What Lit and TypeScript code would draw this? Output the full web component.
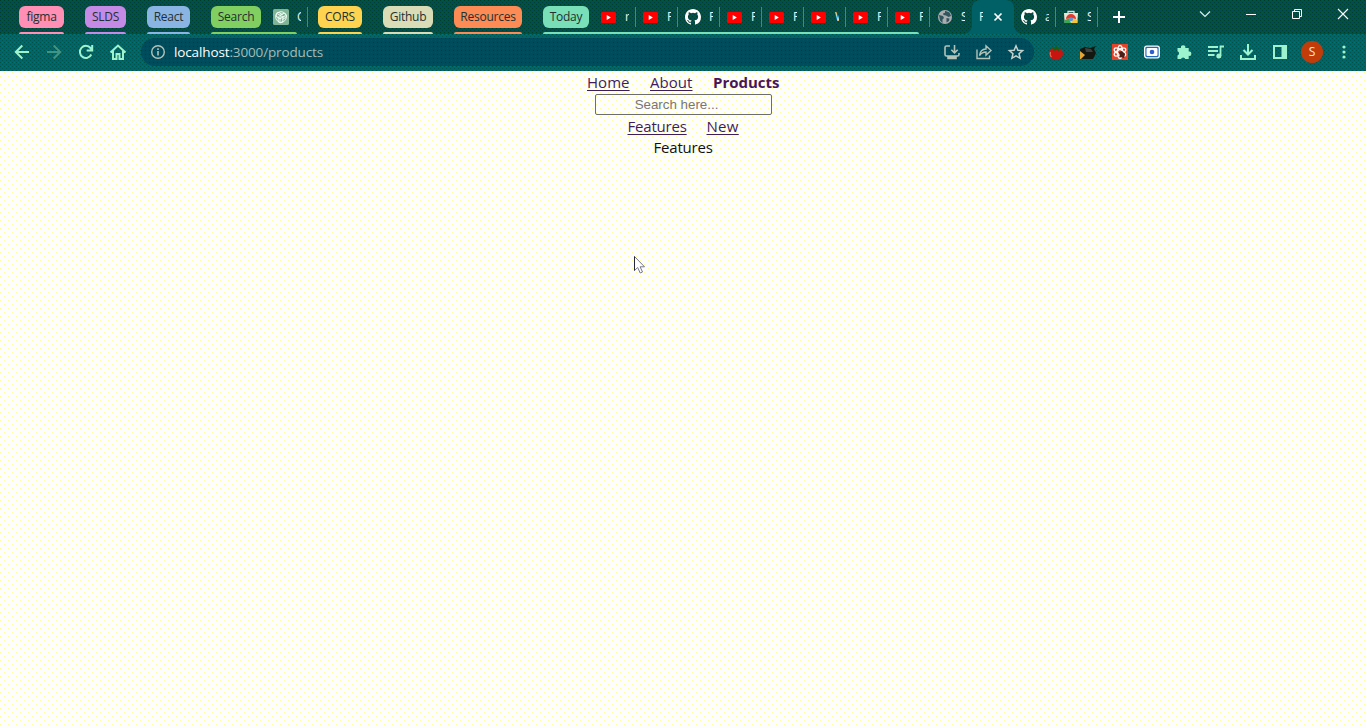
import { LitElement, html, css, svg, nothing } from "lit";
import { customElement, property } from "lit/decorators.js";

const youtube = svg`<rect x="0" y="3" width="15" height="11" rx="1.5" fill="#f00"/><path d="M5.700 6v5L9.900 8.500z" fill="#fff"/>`;
const github = svg`<path fill="#fff" d="M8 0C3.580 0 0 3.580 0 8c0 3.540 2.290 6.530 5.470 7.590.4.070.55-.170.55-.380 0-.190-.010-.820-.010-1.490-2.010.370-2.530-.490-2.690-.940-.090-.230-.480-.940-.820-1.130-.280-.150-.680-.520-.010-.530.630-.010 1.080.580 1.230.820.720 1.210 1.870.870 2.330.660.070-.520.280-.870.510-1.070-1.780-.2-3.640-.890-3.640-3.950 0-.870.310-1.590.820-2.150-.080-.2-.360-1.020.080-2.120 0 0 .670-.210 2.200.820a7.600 7.600 0 0 1 4 0c1.530-1.040 2.200-.820 2.200-.820.440 1.100.160 1.920.080 2.120.510.560.820 1.270.820 2.150 0 3.070-1.870 3.750-3.650 3.950.290.250.540.730.540 1.480 0 1.070-.010 1.930-.010 2.200 0 .210.150.460.550.380A8.010 8.010 0 0 0 16 8c0-4.420-3.580-8-8-8z"/>`;
const gpt = svg`<rect width="16" height="16" rx="1.500" fill="#7fb496"/><g fill="none" stroke="#f4fff8" stroke-width="0.900"><path id="petal" d="M7 12.500V6.300l3-1.700a2.400 2.400 0 0 1 2.600 4L9 10.600"/><path d="M7 12.500V6.300l3-1.700a2.400 2.400 0 0 1 2.600 4L9 10.600" transform="rotate(120 8 8)"/><path d="M7 12.500V6.300l3-1.700a2.400 2.400 0 0 1 2.600 4L9 10.600" transform="rotate(240 8 8)"/><circle cx="8" cy="8" r="5.300"/></g>`;
const globe = svg`<circle cx="8" cy="8" r="7" fill="#a9adb0"/><path fill="#32545c" d="M2 6l4 1 1 2-1.500 1.500V14L3 11.500zM8 1.800l4.500 1.700L14 7l-2.500 1L9 6.500 6.500 6 6 4.500l2-.7zM9.500 9l3 .5-.5 2.500-2.500 1.500z"/>`;
const store = svg`<path d="M5 4V2.500h6V4" fill="none" stroke="#ddd" stroke-width="1.300"/><path d="M1 4h14l-.7 10H1.700z" fill="#e9e6d8"/><path d="M3 10a5 5 0 0 1 10 0l-5-.8z" fill="#e23b2e"/><path d="M1.500 11 6 9.500 8 14H1.700z" fill="#38a852"/><path d="M14.500 11 10 9.500 8 14h6.300z" fill="#f4c63a"/><circle cx="8" cy="10.300" r="2" fill="#5a93e8"/>`;

interface Tab { icon: unknown; text: string }
interface Group { name: string; color: string; width: number; line: number; tabs?: Tab[] }

const yt = (text: string): Tab => ({ icon: youtube, text });
const groups: Group[] = [
  { name: "figma", color: "#ff8fb5", width: 45, line: 45 },
  { name: "SLDS", color: "#c58ae6", width: 41, line: 41 },
  { name: "React", color: "#8ab4e4", width: 43, line: 43 },
  { name: "Search", color: "#81cf60", width: 50, line: 86, tabs: [{ icon: gpt, text: "C" }] },
  { name: "CORS", color: "#fdd350", width: 44, line: 44 },
  { name: "Github", color: "#dadcb8", width: 50, line: 50 },
  { name: "Resources", color: "#fc8b55", width: 68, line: 68 },
  {
    name: "Today", color: "#78dfb8", width: 46, line: 376,
    tabs: [yt("r"), yt("F"), { icon: github, text: "F" }, yt("F"), yt("F"), yt("W"), yt("F"), yt("F")],
  },
];

const mint = "#9ef3cf";
const pale = "#b3c3b8";
const stroke = (d: string, color = mint, w = 2) => svg`<path d=${d} fill="none" stroke=${color} stroke-width=${w}/>`;

const navIcons = [
  stroke("M17 10H4M10.300 3.500 3.800 10l6.500 6.500"),
  stroke("M3 10h13M9.700 3.500l6.500 6.500-6.500 6.500", "#3f9488"),
  stroke("M15.300 12.500A6 6 0 1 1 14.500 6l1.500 1.800M16.200 3v5.500h-5.500"),
  stroke("M5 9v8h3.500v-5h3v5H15V9M2.500 10.500 10 3.500l7.500 7"),
];
const pageIcons = [
  stroke("M8 4H4.500q-1.500 0-1.500 1.500v7q0 1.500 1.500 1.500h11q1.500 0 1.500-1.500V11M6 15.500h8v1H6zM12.500 3v7.500M9.300 7.700l3.200 3.200 3.200-3.200", pale, 1.600),
  stroke("M3 7.500v9h12.500v-3M5.500 13.500c.5-4 3-6.300 6.500-6.500V3.800l5 4.700-5 4.600V10c-3 0-4.700 1-6.500 3.500z", pale, 1.400),
  stroke("M10 3.800l1.900 4.400 4.700.4-3.600 3.100 1.100 4.600L10 13.900l-4.100 2.400L7 11.700 3.400 8.600l4.700-.4z", "#c6d3cc", 1.500),
];
const extIcons = [
  svg`<ellipse cx="10" cy="11.500" rx="7" ry="6.300" fill="#c81410"/><path d="M4.500 10q-1 3 1 5" stroke="#ef6a50" stroke-width="1.200" fill="none"/><path d="M9.300 3h1.500v2.500l4 .5-2.300 1.200.8 2-3-1.700-3.200 1.700.8-2L5.400 6l3.900-.5z" fill="#166018"/>`,
  svg`<path d="M2 7l5-2 5 1 6-2-2 3 2 4-3 6H2z" fill="#14170f"/><path d="M2 9l5 4-4 4H2z" fill="#e8a433"/><path d="M7 6l6 1 2 3-7 0z" fill="#3b4140"/>`,
  svg`<path fill="#e5442a" d="M2 2h16v16H2z"/><g fill="none" stroke="#fff" stroke-width="1.300"><ellipse cx="10" cy="10" rx="2.500" ry="6.500"/><ellipse cx="10" cy="10" rx="2.500" ry="6.500" transform="rotate(60 10 10)"/><ellipse cx="10" cy="10" rx="2.500" ry="6.500" transform="rotate(120 10 10)"/></g><path d="M9 10l3-1 3 3-1 4-4-1z" fill="#4b1f18"/>`,
  svg`<rect x="2.700" y="4.200" width="14.600" height="11.600" rx="2" fill="#2468bd" stroke="#fff" stroke-width="1.300"/><rect x="4.500" y="6" width="11" height="8" rx="1" fill="#fff"/><circle cx="10" cy="10" r="2.300" fill="#2d5fd0"/>`,
  svg`<path fill=${mint} d="M3.500 6H7a2.200 2.200 0 1 1 4.300 0h3.400v3.500a2.200 2.200 0 1 1 0 4.300V17h-3.500a2.200 2.200 0 0 0-4.200 0H3.500v-3.500a2.200 2.200 0 0 0 0-4.200z"/>`,
  svg`<path d="M2 5h10M2 9h10M2 13h6.500M14.500 14V4.500H18" fill="none" stroke=${mint} stroke-width="1.800"/><circle cx="12.800" cy="14" r="2.500" fill=${mint}/>`,
  stroke("M10 2v10M5.500 8l4.500 4.500L14.500 8M3 13v4h14v-4"),
  svg`<path d="M4 4h12v12H4z" fill="none" stroke=${mint} stroke-width="2"/><path d="M11.500 4H17v12h-5.500z" fill=${mint}/>`,
];
const dots = svg`<g fill=${mint}><circle cx="10" cy="5" r="1.600"/><circle cx="10" cy="10" r="1.600"/><circle cx="10" cy="15" r="1.600"/></g>`;

const icon20 = (shape: unknown) => html`<svg class="i20" viewBox="0 0 20 20">${shape}</svg>`;

@customElement("browser-tab")
class BrowserTab extends LitElement {
  @property({ attribute: false }) icon: unknown;
  @property() label = "";
  static styles = css`
    :host { display: flex; position: relative; flex: none; box-sizing: border-box; width: 42px; height: 20px; padding-left: 7px; align-items: center; border-right: 1px solid #4b8580; }
    svg { width: 16px; height: 16px; flex: none; margin-right: 8px; }
    span { width: 4px; overflow: hidden; white-space: nowrap; font: 12px/16px "Open Sans", sans-serif; color: #e6f5f0; }
  `;
  render() {
    return html`<svg viewBox="0 0 16 16">${this.icon}</svg><span>${this.label}</span>`;
  }
}

@customElement("app-root")
class AppRoot extends LitElement {
  static styles = css`
    :host { display: flex; flex-direction: column; height: 728px; overflow: hidden; position: relative; font-family: "Open Sans", sans-serif; background: #fdfdfd; }
    svg { display: block; }
    .strip { display: flex; height: 34px; padding-left: 19px; box-sizing: border-box; background-color: #004b5c; background-image: conic-gradient(at 1px 1px, transparent 75%, #003c28 0), conic-gradient(at 1px 1px, transparent 75%, #00402c 0), conic-gradient(at 1px 1px, transparent 75%, #005548 0); background-size: 4px 4px; background-position: 0 0, 2px 2px, 2px 0; }
    .group { position: relative; display: flex; height: 34px; flex: none; gap: 5px; margin-right: 21px; box-sizing: border-box; padding-top: 6px; }
    .group.tabbed { margin-right: 10px; }
    .group:nth-child(8) { margin-right: 0; }
    .chip { height: 22px; border-radius: 6px; text-align: center; font-size: 12px; line-height: 21px; letter-spacing: -0.25px; color: #24302f; white-space: nowrap; }
    .line { position: absolute; left: 0; top: 32px; height: 2px; border-radius: 2px 2px 0 0; }
    .tabs { display: flex; padding-top: 1px; }
    .loose { padding-top: 7px; }
    .active { position: relative; flex: none; display: flex; align-items: center; width: 42px; height: 34px; border-radius: 8px 8px 0 0; background: #006066; color: #e6f5f0; font-size: 12px; box-sizing: border-box; padding-left: 7px; }
    .active::before, .active::after { content: ""; position: absolute; bottom: 0; width: 8px; height: 8px; }
    .active::before { left: -8px; background: radial-gradient(circle at 0 0, transparent 7.500px, #006066 8px); }
    .active::after { right: -8px; background: radial-gradient(circle at 100% 0, transparent 7.500px, #006066 8px); }
    .letter { width: 4px; overflow: hidden; margin-right: 10px; line-height: 16px; }
    .plus { margin: 10px 0 0 14px; width: 14px; height: 14px; }
    .window { display: flex; margin-left: auto; }
    .window svg { width: 46px; height: 28px; }
    .bar { display: flex; align-items: flex-start; height: 37px; flex: none; padding: 0 6px; box-sizing: border-box; background-color: #006273; background-image: conic-gradient(at 1px 1px, transparent 75%, #005040 0), conic-gradient(at 1px 1px, transparent 75%, #005444 0), conic-gradient(at 1px 1px, transparent 75%, #00707c 0); background-size: 4px 4px; background-position: 0 0, 2px 2px, 2px 0; }
    .cell { width: 32px; height: 36px; display: flex; align-items: center; justify-content: center; flex: none; }
    .i20 { width: 20px; height: 20px; }
    .omni { display: flex; align-items: center; width: 893px; height: 28px; margin: 4px 6px 0 7px; box-sizing: border-box; padding: 0 2px 0 9px; border-radius: 14px; background-color: #004c5c; background-image: conic-gradient(at 1px 1px, transparent 75%, #003f2c 0), conic-gradient(at 1px 1px, transparent 75%, #00584a 0); background-size: 4px 4px; background-position: 0 0, 2px 2px; }
    .info { width: 16px; height: 16px; margin-right: 8px; }
    .url { flex: 1; font-size: 13.500px; line-height: 20px; letter-spacing: -0.13px; color: #a3bdb6; }
    .url b { font-weight: 400; color: #fff; }
    .avatar { width: 22px; height: 22px; border-radius: 50%; background: #c23c0a; color: #fbe9df; font-size: 12px; line-height: 22px; text-align: center; }
    .page { flex: 1; display: flex; flex-direction: column; align-items: center; padding-top: 1px; color: #111; font-size: 15px; line-height: 21px; background-color: #fdfdfd; background-image: conic-gradient(at 1px 1px, transparent 75%, #ffff9c 0), conic-gradient(at 1px 1px, transparent 75%, #ffff9c 0); background-size: 8px 8px; background-position: 4px 1px, 0 5px; }
    nav { display: flex; gap: 20px; height: 22px; }
    a { color: #3f1d5c; text-decoration: underline; text-underline-offset: 2px; text-decoration-thickness: 1px; white-space: nowrap; }
    .home, .about { width: 43px; letter-spacing: 0.05px; }
    .current { font-weight: 700; text-decoration: none; color: #4a1557; width: 66px; letter-spacing: -0.03px; }
    .features { width: 59px; letter-spacing: -0.2px; white-space: nowrap; }
    .new { width: 32px; letter-spacing: 0.3px; }
    input { display: block; width: 177px; height: 21px; box-sizing: border-box; border: 1px solid #6d6d70; border-radius: 2px; padding: 1px 15px 1px 2px; text-align: center; background: transparent; font: 13.333px "Liberation Sans", sans-serif; flex: none; }
    input::placeholder { color: #777; }
    .second { margin-top: 1px; height: 21px; }
    .cursor { position: absolute; left: 633px; top: 255px; width: 14px; height: 20px; }
  `;

  renderGroup(g: Group) {
    return html`<div class="group ${g.tabs ? "tabbed" : ""}">
      <div class="chip" style="width:${g.width}px;background:${g.color}">${g.name}</div>
      ${g.tabs ? html`<div class="tabs">${g.tabs.map((t) => html`<browser-tab .icon=${t.icon} label=${t.text}></browser-tab>`)}</div>` : nothing}
      <div class="line" style="width:${g.line}px;background:${g.color}"></div>
    </div>`;
  }

  render() {
    return html`
      <div class="strip">
        ${groups.map((g) => this.renderGroup(g))}
        <div class="loose"><browser-tab style="border-color:transparent" .icon=${globe} label="S"></browser-tab></div>
        <div class="active"><span class="letter">F</span>
          <svg width="10" height="10" viewBox="0 0 10 10"><path d="M1.500 1.500l7 7M8.500 1.500l-7 7" stroke="#fff" stroke-width="1.700"/></svg>
        </div>
        <div class="loose"><browser-tab .icon=${github} label="a"></browser-tab></div>
        <div class="loose"><browser-tab .icon=${store} label="S"></browser-tab></div>
        <svg class="plus" viewBox="0 0 14 14"><path d="M7 1v12M1 7h12" stroke="#fff" stroke-width="2"/></svg>
        <div class="window">
          <svg viewBox="0 0 46 28"><path d="M18 11.500l5 5 5-5" fill="none" stroke="#dcefed" stroke-width="1.200"/></svg>
          <svg viewBox="0 0 46 28"><path d="M18 14.500h10" stroke="#fff"/></svg>
          <svg viewBox="0 0 46 28"><path d="M18.500 11.500h7v7h-7zM20.500 11V9.500h7v7H26" fill="none" stroke="#fff"/></svg>
          <svg viewBox="0 0 46 28"><path d="M18 9l10 10M28 9L18 19" stroke="#fff" stroke-width="1.100"/></svg>
        </div>
      </div>
      <div class="bar">
        ${navIcons.map((i) => html`<div class="cell">${icon20(i)}</div>`)}
        <div class="omni">
          <svg class="info" viewBox="0 0 16 16"><circle cx="8" cy="8" r="6.300" fill="none" stroke="#b3c3b8" stroke-width="1.400"/><path d="M8 7v4.500M8 4.300v1.700" stroke="#b3c3b8" stroke-width="1.600"/></svg>
          <div class="url"><b>localhost</b>:3000/products</div>
          ${pageIcons.map((i) => html`<div class="cell">${icon20(i)}</div>`)}
        </div>
        ${extIcons.map((i) => html`<div class="cell">${icon20(i)}</div>`)}
        <div class="cell"><div class="avatar">S</div></div>
        <div class="cell">${icon20(dots)}</div>
      </div>
      <main class="page">
        <nav><a class="home">Home</a><a class="about">About</a><a class="current">Products</a></nav>
        <input placeholder="Search here..." />
        <nav class="second"><a class="features">Features</a><a class="new">New</a></nav>
        <div class="features">Features</div>
      </main>
      <svg class="cursor" viewBox="0 0 14 20"><path d="M1.500 1.500v14l3.200-3 2.500 5.500 2.300-1-2.400-5.200h4.400z" fill="#fff" stroke="#77778a"/><path d="M1.500 1.500v14" stroke="#25253d"/></svg>
    `;
  }
}
